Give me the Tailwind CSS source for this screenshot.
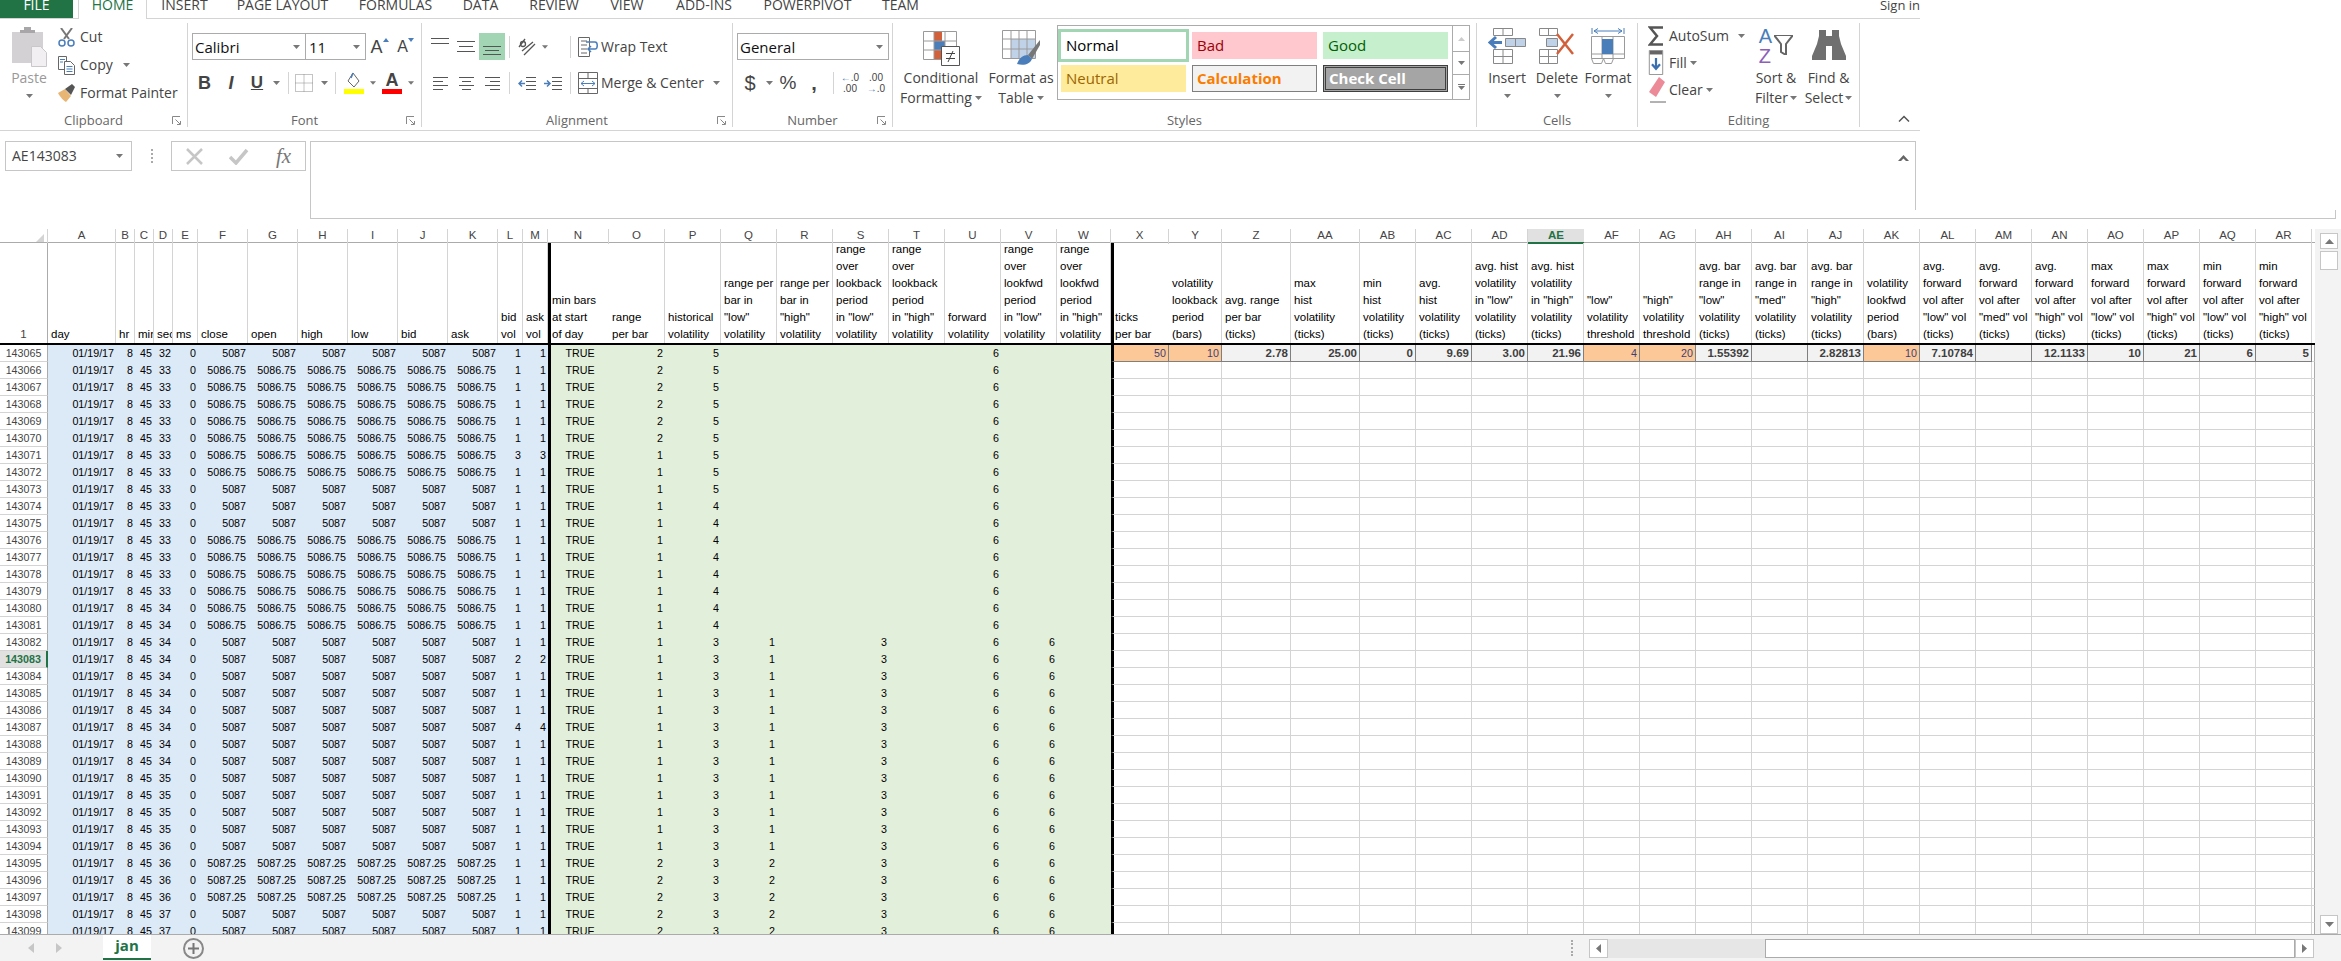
<!DOCTYPE html>
<html lang="en">
<head>
    <meta charset="UTF-8">
    <title>Excel - jan</title>
    <script src="https://cdn.jsdelivr.net/npm/@tailwindcss/browser@4"></script>
</head>
<body class="w-[2341px] h-[961px] overflow-hidden bg-white font-['Open_Sans',sans-serif] text-[#444]">
    <svg class="hidden">
        <symbol id="caret" viewBox="0 0 7 4"><path d="M0 0h7L3.500 4z" fill="#777"/></symbol>
        <symbol id="launcher" viewBox="0 0 9 9"><path d="M.5 8V.5H8M3.500 3.500L8 8M8.500 5v3.500H5" fill="none" stroke="#888"/></symbol>
    </svg>

    <!-- Tabs -->
    <div class="flex h-[18px] w-[1920px] text-[14px] leading-[10px]">
        <div class="w-[73px] h-[18px] bg-[#217346] text-white text-center">FILE</div>
        <div class="relative z-10 ml-[5px] w-[69px] h-[19px] bg-white border-x border-[#d4d4d4] text-[#217346] text-center">HOME</div>
        <div class="w-[75px] text-center">INSERT</div>
        <div class="w-[121px] text-center">PAGE LAYOUT</div>
        <div class="w-[105px] text-center">FORMULAS</div>
        <div class="w-[65px] text-center">DATA</div>
        <div class="w-[82px] text-center">REVIEW</div>
        <div class="w-[64px] text-center">VIEW</div>
        <div class="w-[90px] text-center">ADD-INS</div>
        <div class="w-[117px] text-center">POWERPIVOT</div>
        <div class="w-[69px] text-center">TEAM</div>
        <div class="ml-auto text-[13px]">Sign in</div>
    </div>

    <!-- Ribbon -->
    <div class="flex w-[1920px] h-[113px] pt-[4px] border-y border-[#d4d4d4] text-[14px] leading-[20px]">

        <!-- Clipboard -->
        <div class="w-[188px] h-[104px] border-r border-[#d4d4d4] flex flex-col">
            <div class="h-[90px] flex">
                <div class="w-[58px] flex flex-col items-center text-[#999]">
                    <svg class="mt-[4px]" width="38" height="40" viewBox="0 0 38 40">
                        <rect x="2" y="5" width="31" height="31" fill="#d3d1d3"/>
                        <path d="M10 6V3h4V0h7v3h4v3z" fill="#a8a6a8"/>
                        <path d="M21.500 19.500h9l6 6v14h-15z" fill="#f2eff3" stroke="#c9c7c9"/>
                    </svg>
                    <span class="mt-[1px]">Paste</span>
                    <svg class="mt-[6px]" width="7" height="4"><use href="#caret"/></svg>
                </div>
                <div class="flex flex-col">
                    <div class="h-[28px] flex items-center gap-[5px]">
                        <svg width="17" height="19" viewBox="0 0 17 19"><path d="M3 0l8 11M14 0L6 11" stroke="#777" stroke-width="2"/><circle cx="4" cy="15" r="3" fill="none" stroke="#4a7ebb" stroke-width="1.500"/><circle cx="13" cy="15" r="3" fill="none" stroke="#4a7ebb" stroke-width="1.500"/></svg>
                        <span>Cut</span>
                    </div>
                    <div class="h-[28px] flex items-center gap-[5px]">
                        <svg width="17" height="19" viewBox="0 0 17 19" fill="white" stroke="#666"><path d="M.5.500h8v13h-8z"/><path d="M6.500 5.500h6l4 4v9h-10z"/><path d="M2 3.500h5M2 6h3M8.500 10.500h6M8.500 13h6M8.500 15.500h6" stroke="#4a7ebb"/></svg>
                        <span>Copy</span>
                        <svg class="ml-[5px]" width="7" height="4"><use href="#caret"/></svg>
                    </div>
                    <div class="h-[28px] flex items-center gap-[5px]">
                        <svg width="17" height="18" viewBox="0 0 17 18"><path d="M0 9l7-4 6 7-5 6c-2-1-6-5-8-9z" fill="#e7b574"/><path d="M7 5l7-5 3 3-4 8z" fill="#555"/></svg>
                        <span class="whitespace-nowrap">Format Painter</span>
                    </div>
                </div>
            </div>
            <div class="relative text-center text-[13px] leading-[14px] text-[#666]">Clipboard
                <svg class="absolute right-[6px] top-[3px]" width="9" height="9"><use href="#launcher"/></svg>
            </div>
        </div>

        <!-- Font -->
        <div class="w-[234px] h-[104px] border-r border-[#d4d4d4] flex flex-col">
            <div class="h-[90px] pl-[4px]">
                <div class="mt-[10px] h-[27px] flex items-center">
                    <div class="w-[114px] h-[27px] border border-[#ababab] flex items-center justify-between pl-[2px] pr-[5px] text-[15px] text-[#111]">Calibri
                        <svg width="7" height="4"><use href="#caret"/></svg>
                    </div>
                    <div class="-ml-px w-[61px] h-[27px] border border-[#ababab] flex items-center justify-between pl-[3px] pr-[5px] text-[15px] text-[#111]">11
                        <svg width="7" height="4"><use href="#caret"/></svg>
                    </div>
                    <div class="w-[27px] flex justify-center items-start text-[18px] font-['Liberation_Sans',sans-serif]">A<svg class="mt-[1px]" width="6" height="4"><path d="M0 4l3-4 3 4z" fill="#4a7ebb"/></svg></div>
                    <div class="w-[25px] flex justify-center items-start text-[16px] font-['Liberation_Sans',sans-serif]">A<svg class="mt-[1px]" width="6" height="4"><path d="M0 0h6L3 4z" fill="#4a7ebb"/></svg></div>
                </div>
                <div class="mt-[9px] h-[28px] flex items-center font-['Liberation_Sans',sans-serif]">
                    <div class="w-[25px] text-center font-bold text-[18px]">B</div>
                    <div class="w-[28px] text-center font-bold italic text-[18px]">I</div>
                    <div class="w-[24px] text-center font-bold text-[17px] underline">U</div>
                    <div class="w-[14px] flex justify-center"><svg width="7" height="4"><use href="#caret"/></svg></div>
                    <div class="ml-[5px] w-px h-[22px] bg-[#d4d4d4]"></div>
                    <div class="w-[30px] flex justify-center">
                        <svg width="18" height="18" viewBox="0 0 18 18" fill="none" stroke="#888" stroke-dasharray="1 1"><path d="M.5.500h17v17H.5zM9 .5v17M.5 9h17"/></svg>
                    </div>
                    <div class="w-[10px] flex justify-center"><svg width="7" height="4"><use href="#caret"/></svg></div>
                    <div class="ml-[6px] w-px h-[22px] bg-[#d4d4d4]"></div>
                    <div class="ml-[2px] w-[32px] flex justify-center">
                        <svg width="20" height="22" viewBox="0 0 20 22"><path d="M9 1l6 8-5 6-6-6z" fill="white" stroke="#666"/><path d="M7 6l2-5" stroke="#4a7ebb" stroke-width="1.500"/><rect y="17" width="20" height="5" fill="#ff0"/></svg>
                    </div>
                    <div class="w-[6px] flex justify-center"><svg width="7" height="4"><use href="#caret"/></svg></div>
                    <div class="w-[32px] flex flex-col items-center leading-[17px]">
                        <span class="font-bold text-[18px] h-[17px]">A</span>
                        <span class="w-[20px] h-[5px] bg-[#f00]"></span>
                    </div>
                    <div class="w-[6px] flex justify-center"><svg width="7" height="4"><use href="#caret"/></svg></div>
                </div>
            </div>
            <div class="relative text-center text-[13px] leading-[14px] text-[#666]">Font
                <svg class="absolute right-[6px] top-[3px]" width="9" height="9"><use href="#launcher"/></svg>
            </div>
        </div>

        <!-- Alignment -->
        <div class="w-[311px] h-[104px] border-r border-[#d4d4d4] flex flex-col">
            <div class="h-[90px] pl-[5px]">
                <div class="mt-[10px] h-[27px] flex items-center">
                    <div class="w-[26px] flex justify-center"><svg width="18" height="20" viewBox="0 0 18 20" stroke="#555"><path d="M0 1.500h18M0 6.500h18"/></svg></div>
                    <div class="w-[26px] flex justify-center"><svg width="18" height="20" viewBox="0 0 18 20" stroke="#555"><path d="M0 4.500h18M2 9.500h14M0 14.500h18"/></svg></div>
                    <div class="w-[26px] h-[27px] bg-[#a2d5b4] flex justify-center items-center"><svg width="18" height="20" viewBox="0 0 18 20" stroke="#555"><path d="M0 9.500h18M2 13.500h14M0 17.500h18"/></svg></div>
                    <div class="ml-[4px] w-px h-[22px] bg-[#d4d4d4]"></div>
                    <div class="ml-[2px] w-[30px] flex justify-center"><svg width="20" height="20" viewBox="0 0 20 20" fill="none" stroke="#555" stroke-width="1.300"><path d="M2 10l6-8M5 14l11-9M7 18l11-11"/><circle cx="6" cy="7" r="2.500"/></svg></div>
                    <div class="w-[6px] flex justify-center"><svg width="7" height="4"><use href="#caret"/></svg></div>
                    <div class="ml-[22px] w-px h-[22px] bg-[#d4d4d4]"></div>
                    <div class="w-[30px] flex justify-end pr-[3px]"><svg width="20" height="20" viewBox="0 0 20 20" fill="none" stroke="#666"><path d="M.5.500h11v19H.5zM3 4h6M3 8h6M3 12h6M3 16h6"/><path d="M8 5h9c3 0 3 7 0 7h-6M13 9l-3 3 3 3" stroke="#4a7ebb" stroke-width="1.500"/></svg></div>
                    <span class="whitespace-nowrap">Wrap Text</span>
                </div>
                <div class="mt-[9px] h-[28px] flex items-center">
                    <div class="w-[26px] flex justify-center"><svg width="15" height="13" viewBox="0 0 15 13" stroke="#555"><path d="M0 .5h15M0 4.500h10M0 8.500h15M0 12.500h10"/></svg></div>
                    <div class="w-[26px] flex justify-center"><svg width="15" height="13" viewBox="0 0 15 13" stroke="#555"><path d="M0 .5h15M3 4.500h9M0 8.500h15M3 12.500h9"/></svg></div>
                    <div class="w-[26px] flex justify-center"><svg width="15" height="13" viewBox="0 0 15 13" stroke="#555"><path d="M0 .5h15M5 4.500h10M0 8.500h15M5 12.500h10"/></svg></div>
                    <div class="ml-[4px] w-px h-[22px] bg-[#d4d4d4]"></div>
                    <div class="ml-[4px] w-[26px] flex justify-center"><svg width="18" height="13" viewBox="0 0 18 13" fill="none"><path d="M8 .5h10M8 4.500h10M8 8.500h10M8 12.500h10" stroke="#555"/><path d="M7 6.500H1M4 3.500l-3 3 3 3" stroke="#4a7ebb" stroke-width="1.500"/></svg></div>
                    <div class="w-[26px] flex justify-center"><svg width="18" height="13" viewBox="0 0 18 13" fill="none"><path d="M8 .5h10M8 4.500h10M8 8.500h10M8 12.500h10" stroke="#555"/><path d="M0 6.500h6M3 3.500l3 3-3 3" stroke="#4a7ebb" stroke-width="1.500"/></svg></div>
                    <div class="ml-[4px] w-px h-[22px] bg-[#d4d4d4]"></div>
                    <div class="w-[30px] flex justify-end pr-[3px]"><svg width="20" height="22" viewBox="0 0 20 22" fill="none" stroke="#666"><path d="M.5.500h19v21H.5zM.5 6.500h19M.5 16.500h19M10 .5v6M10 16.500v5"/><path d="M3 11.500h14M6 9l-3 2.500L6 14M14 9l3 2.500-3 2.500" stroke="#4a7ebb"/></svg></div>
                    <span class="whitespace-nowrap">Merge &amp; Center</span>
                    <svg class="ml-[9px]" width="7" height="4"><use href="#caret"/></svg>
                </div>
            </div>
            <div class="relative text-center text-[13px] leading-[14px] text-[#666]">Alignment
                <svg class="absolute right-[6px] top-[3px]" width="9" height="9"><use href="#launcher"/></svg>
            </div>
        </div>

        <!-- Number -->
        <div class="w-[160px] h-[104px] border-r border-[#d4d4d4] flex flex-col">
            <div class="h-[90px] pl-[4px]">
                <div class="mt-[10px] w-[152px] h-[27px] border border-[#ababab] flex items-center justify-between pl-[2px] pr-[5px] text-[15px] text-[#111]">General
                    <svg width="7" height="4"><use href="#caret"/></svg>
                </div>
                <div class="mt-[9px] h-[28px] flex items-center font-['Liberation_Sans',sans-serif]">
                    <div class="w-[26px] text-center text-[20px]">$</div>
                    <div class="w-[12px] flex justify-center"><svg width="7" height="4"><use href="#caret"/></svg></div>
                    <div class="w-[26px] text-center text-[19px]">%</div>
                    <div class="w-[26px] text-center text-[20px] font-bold">,</div>
                    <div class="ml-[6px] w-px h-[22px] bg-[#d4d4d4]"></div>
                    <div class="ml-[1px] w-[30px] flex flex-col items-center text-[10px] leading-[11px]"><span><b class="text-[#4a7ebb]">←</b>.0</span><span>.00</span></div>
                    <div class="w-[22px] flex flex-col items-center text-[10px] leading-[11px]"><span>.00</span><span><b class="text-[#4a7ebb]">→</b>.0</span></div>
                </div>
            </div>
            <div class="relative text-center text-[13px] leading-[14px] text-[#666]">Number
                <svg class="absolute right-[6px] top-[3px]" width="9" height="9"><use href="#launcher"/></svg>
            </div>
        </div>

        <!-- Styles -->
        <div class="w-[584px] h-[104px] border-r border-[#d4d4d4] flex flex-col">
            <div class="h-[90px] flex pl-[8px]">
                <div class="w-[80px] flex flex-col items-center">
                    <div class="h-[45px] pt-[8px]">
                        <svg width="37" height="35" viewBox="0 0 37 35" fill="none" stroke="#9a9a9a">
                            <path d="M.5.500h33v28H.5z" fill="white"/>
                            <rect x="11" y="1" width="8" height="9" fill="#d2603a" stroke="none"/>
                            <rect x="11" y="10" width="11" height="9" fill="#4a7ebb" stroke="none"/>
                            <rect x="11" y="19" width="8" height="9" fill="#d2603a" stroke="none"/>
                            <path d="M11 .5v28M22 .5v28M.5 10h33M.5 19h33"/>
                            <path d="M18.500 15.500h18v19h-18z" fill="white" stroke="#555"/>
                            <path d="M23 22.500h9M23 27.500h9M30 20l-5 11" stroke="#444"/>
                        </svg>
                    </div>
                    <span class="whitespace-nowrap">Conditional</span>
                    <span class="flex items-center gap-[3px] whitespace-nowrap">Formatting<svg width="7" height="4"><use href="#caret"/></svg></span>
                </div>
                <div class="w-[76px] pl-[4px] flex flex-col items-center">
                    <div class="h-[45px] pt-[7px]">
                        <svg width="38" height="36" viewBox="0 0 38 36" fill="none" stroke="#9a9a9a">
                            <path d="M.5.500h33v28H.5z" fill="white"/>
                            <rect x="9" y="9" width="24" height="19" fill="#c0d2e8" stroke="none"/>
                            <path d="M9 .5v28M17 .5v28M25 .5v28M.5 9h33M.5 19h33"/>
                            <path d="M38 10L26 25l4 4 8-14z" fill="#777" stroke="none"/>
                            <path d="M15 34c2-6 6-9 11-9l4 4c-2 5-8 7-15 5z" fill="#4a7ebb" stroke="none"/>
                        </svg>
                    </div>
                    <span class="whitespace-nowrap">Format as</span>
                    <span class="flex items-center gap-[3px]">Table<svg width="7" height="4"><use href="#caret"/></svg></span>
                </div>
                <div class="mt-[2px] w-[413px] h-[75px] border border-[#ababab] flex text-[15px]">
                    <div class="w-[394px] pl-[3px] pt-[6px] grid grid-cols-[125px_125px_125px] grid-rows-[27px_27px] gap-[6px]">
                        <div class="bg-white outline-[3px] outline-solid outline-[#a2d5b4] text-black pl-[5px] leading-[27px]">Normal</div>
                        <div class="bg-[#ffc7ce] text-[#9c0006] pl-[5px] leading-[27px]">Bad</div>
                        <div class="bg-[#c6efce] text-[#006100] pl-[5px] leading-[27px]">Good</div>
                        <div class="bg-[#ffeb9c] text-[#9c6500] pl-[5px] leading-[27px]">Neutral</div>
                        <div class="bg-[#f2f2f2] border border-[#7f7f7f] text-[#fa7d00] font-bold pl-[4px] leading-[25px]">Calculation</div>
                        <div class="bg-[#a5a5a5] border-[3px] border-double border-[#3f3f3f] text-white font-bold pl-[3px] leading-[21px]">Check Cell</div>
                    </div>
                    <div class="w-[17px] flex flex-col border-l border-[#ababab]">
                        <div class="h-[26px] border-b border-[#ababab] flex items-center justify-center"><svg width="7" height="4"><path d="M0 4l3.500-4L7 4z" fill="#ccc"/></svg></div>
                        <div class="h-[23px] border-b border-[#ababab] flex items-center justify-center"><svg width="7" height="4"><use href="#caret"/></svg></div>
                        <div class="flex-1 flex flex-col items-center justify-center gap-[1px]"><span class="w-[7px] h-px bg-[#777]"></span><svg width="7" height="4"><use href="#caret"/></svg></div>
                    </div>
                </div>
            </div>
            <div class="text-center text-[13px] leading-[14px] text-[#666]">Styles</div>
        </div>

        <!-- Cells -->
        <div class="w-[161px] h-[104px] border-r border-[#d4d4d4] flex flex-col">
            <div class="h-[90px] flex pl-[5px]">
                <div class="w-[50px] flex flex-col items-center">
                    <div class="h-[45px] pt-[5px]">
                        <svg width="38" height="36" viewBox="0 0 38 36" fill="none" stroke="#888">
                            <path d="M5.500.500h19v7h-19zM15 .5v7M5.500 21.500h19v14h-19zM15 21.500v14M5.500 28.500h19"/>
                            <path d="M17.500 10.500h20v8h-20z" fill="#c0d2e8"/><path d="M27.500 10.500v8"/>
                            <path d="M14 14.500H3M8 9l-6 5.500L8 20" stroke="#4a7ebb" stroke-width="3"/>
                        </svg>
                    </div>
                    <span>Insert</span>
                    <svg class="mt-[6px]" width="7" height="4"><use href="#caret"/></svg>
                </div>
                <div class="w-[50px] flex flex-col items-center">
                    <div class="h-[45px] pt-[5px]">
                        <svg width="36" height="36" viewBox="0 0 36 36" fill="none" stroke="#888">
                            <path d="M.5.500h18v7H.5zM9.500.5v7M.5 21.500h18v14H.5zM9.500 21.500v14M.5 28.500h18"/>
                            <path d="M7.500 10.500h11v8h-11z" fill="#c0d2e8"/>
                            <path d="M18 6l16 20M34 6L18 26" stroke="#d2603a" stroke-width="2.500"/>
                        </svg>
                    </div>
                    <span>Delete</span>
                    <svg class="mt-[6px]" width="7" height="4"><use href="#caret"/></svg>
                </div>
                <div class="w-[52px] flex flex-col items-center">
                    <div class="h-[45px] pt-[4px]">
                        <svg width="34" height="37" viewBox="0 0 34 37" fill="none" stroke="#9a9a9a">
                            <path d="M1 1v6M33 1v6M3 4h28M7 1.500L3 4l4 2.500M27 1.500L31 4l-4 2.500" stroke="#4a7ebb"/>
                            <path d="M.5 9.500h33v22H.5zM11 9.500v22M22 9.500v22M.5 27h33"/>
                            <rect x="11" y="12" width="11" height="15" fill="#4a7ebb" stroke="none"/>
                            <path d="M.5 31.500l2 5h8l2-5M12.500 31.500l2 5h6l2-5"/>
                        </svg>
                    </div>
                    <span>Format</span>
                    <svg class="mt-[6px]" width="7" height="4"><use href="#caret"/></svg>
                </div>
            </div>
            <div class="text-center text-[13px] leading-[14px] text-[#666]">Cells</div>
        </div>

        <!-- Editing -->
        <div class="w-[222px] h-[104px] border-r border-[#d4d4d4] flex flex-col">
            <div class="h-[90px] flex">
                <div class="w-[112px] flex flex-col">
                    <div class="h-[26px] flex items-center">
                        <div class="w-[31px] flex justify-end pr-[5px]"><svg width="16" height="22" viewBox="0 0 16 22" fill="none" stroke="#555" stroke-width="2.500"><path d="M15 2.500H2l7 8.500-7 8.500h13"/></svg></div>
                        <span>AutoSum</span>
                        <svg class="ml-[9px]" width="7" height="4"><use href="#caret"/></svg>
                    </div>
                    <div class="h-[27px] flex items-center">
                        <div class="w-[31px] flex justify-end pr-[5px]"><svg width="16" height="25" viewBox="0 0 16 28" fill="none"><path d="M.5 .5h15v27H.5z" stroke="#888"/><rect x="1" y="1" width="14" height="4" fill="#666"/><path d="M8 9v12M3.500 16L8 21l4.500-5" stroke="#3a6fb0" stroke-width="2.500"/></svg></div>
                        <span>Fill</span>
                        <svg class="ml-[3px]" width="7" height="4"><use href="#caret"/></svg>
                    </div>
                    <div class="h-[28px] flex items-center">
                        <div class="w-[31px] flex justify-end pr-[2px]"><svg width="18" height="26" viewBox="0 0 18 26"><path d="M0 15L10 0l6 5-9 15z" fill="#ec8a97"/><path d="M1 25h16" stroke="#666"/></svg></div>
                        <span>Clear</span>
                        <svg class="ml-[3px]" width="7" height="4"><use href="#caret"/></svg>
                    </div>
                </div>
                <div class="w-[52px] flex flex-col items-center">
                    <div class="h-[45px] flex items-start pt-[3px]">
                        <div class="flex flex-col font-['Liberation_Sans',sans-serif] text-[20px] leading-[20px] pr-[2px]"><span class="text-[#4a7ebb]">A</span><span class="text-[#8d5fb8]">Z</span></div>
                        <svg class="mt-[9px]" width="19" height="20" viewBox="0 0 19 20"><path d="M0 0h19l-7 9v11l-5-3V9z" fill="none" stroke="#666" stroke-width="2"/></svg>
                    </div>
                    <span class="whitespace-nowrap">Sort &amp;</span>
                    <span class="flex items-center gap-[2px]">Filter<svg width="7" height="4"><use href="#caret"/></svg></span>
                </div>
                <div class="w-[53px] flex flex-col items-center">
                    <div class="h-[45px] pt-[7px]">
                        <svg width="34" height="30" viewBox="0 0 34 30" fill="#6f6f6f"><path d="M7 0h7v6h6V0h7v6l2 8 5 12v4H20V16h-6v14H0v-4l5-12 2-8z"/></svg>
                    </div>
                    <span class="whitespace-nowrap">Find &amp;</span>
                    <span class="flex items-center gap-[2px]">Select<svg width="7" height="4"><use href="#caret"/></svg></span>
                </div>
            </div>
            <div class="text-center text-[13px] leading-[14px] text-[#666]">Editing</div>
        </div>

        <div class="flex-1 h-[104px] flex justify-end items-end pr-[10px] pb-[5px]">
            <svg width="12" height="7" viewBox="0 0 12 7" fill="none" stroke="#555" stroke-width="1.500"><path d="M1 6.500l5-5 5 5"/></svg>
        </div>
    </div>

    <!-- Formula bar -->
    <div class="flex h-[98px] pt-[10px]">
        <div class="w-[310px] flex items-start text-[14px]">
            <div class="ml-[5px] w-[127px] h-[30px] border border-[#c6c6c6] flex items-center justify-between pl-[6px] pr-[8px] leading-[28px]">AE143083
                <svg width="7" height="4"><use href="#caret"/></svg>
            </div>
            <div class="w-[39px] h-[30px] flex justify-center items-center">
                <span class="w-[2px] h-[14px] border-l-2 border-dotted border-[#aaa]"></span>
            </div>
            <div class="w-[135px] h-[30px] border border-[#c6c6c6] flex items-center">
                <div class="w-[44px] flex justify-center"><svg width="17" height="17" viewBox="0 0 17 17" stroke="#c6c6c6" stroke-width="2.500"><path d="M1 1l15 15M16 1L1 16"/></svg></div>
                <div class="w-[46px] flex justify-center"><svg width="20" height="17" viewBox="0 0 20 17" fill="none" stroke="#c6c6c6" stroke-width="3.500"><path d="M1 9l6 6L18 2"/></svg></div>
                <div class="w-[43px] text-center font-['Liberation_Serif',serif] italic text-[21px] text-[#777] leading-[28px]">fx</div>
            </div>
        </div>
        <div class="relative w-[2026px] h-[78px] border-l border-b border-[#c6c6c6]">
            <div class="w-[1605px] h-[69px] border-t border-r border-[#c6c6c6] flex justify-end pr-[6px] pt-[12px]">
                <svg width="11" height="8" viewBox="0 0 11 8"><path d="M0 7l5.500-6L11 7H8L5.500 4.500 3 7z" fill="#666"/></svg>
            </div>
            <span class="absolute right-0 bottom-0 w-px h-[8px] bg-[#c6c6c6]"></span>
        </div>
    </div>

    <!-- Sheet -->
    <div class="flex h-[705px]">
        <div id="sheet" class="w-[2315px] h-[705px] overflow-hidden font-['Liberation_Sans',sans-serif]"></div>
        <div class="w-[26px] h-[705px] bg-[#f3f3f3] flex flex-col items-center pt-[4px] pl-[2px]">
            <div class="w-[18px] h-[16px] bg-white border border-[#c6c6c6] flex items-center justify-center"><svg width="9" height="5"><path d="M0 5l4.500-5L9 5z" fill="#777"/></svg></div>
            <div class="mt-[2px] w-[18px] h-[19px] bg-white border border-[#c6c6c6]"></div>
            <div class="mt-auto w-[18px] h-[19px] bg-white border border-[#c6c6c6] flex items-center justify-center"><svg width="9" height="5"><path d="M0 0h9L4.500 5z" fill="#777"/></svg></div>
        </div>
    </div>

    <!-- Status bar -->
    <div class="h-[27px] bg-[#f3f3f3] border-t border-[#ababab] flex items-start">
        <div class="w-[103px] h-[26px] flex items-center">
            <svg class="ml-[28px]" width="6" height="10"><path d="M6 0v10L0 5z" fill="#c6c6c6"/></svg>
            <svg class="ml-[22px]" width="6" height="10"><path d="M0 0v10l6-5z" fill="#c6c6c6"/></svg>
        </div>
        <div class="w-[48px] h-[25px] bg-white border-b-2 border-[#217346] text-center text-[#217346] font-bold text-[15px] leading-[21px]">jan</div>
        <div class="ml-[32px] mt-[3px] w-[21px] h-[21px] rounded-full border-2 border-[#888] flex items-center justify-center">
            <svg width="11" height="11" viewBox="0 0 11 11" stroke="#777" stroke-width="2"><path d="M5.500 0v11M0 5.500h11"/></svg>
        </div>
        <span class="ml-[1367px] mt-[5px] w-[2px] h-[16px] border-l-2 border-dotted border-[#aaa]"></span>
        <div class="ml-[16px] mt-[4px] w-[725px] h-[19px] flex">
            <div class="w-[19px] h-[19px] bg-white border border-[#c6c6c6] flex items-center justify-center"><svg width="5" height="9"><path d="M5 0v9L0 4.500z" fill="#777"/></svg></div>
            <div class="w-[157px] h-[19px] bg-[#e6e6e6]"></div>
            <div class="flex-1 h-[19px] bg-white border border-[#ababab]"></div>
            <div class="w-[19px] h-[19px] bg-white border border-[#c6c6c6] flex items-center justify-center"><svg width="5" height="9"><path d="M0 0v9l5-4.500z" fill="#777"/></svg></div>
        </div>
    </div>

    <script>
        const colNames = ['A','B','C','D','E','F','G','H','I','J','K','L','M','N','O','P','Q','R','S','T','U','V','W','X','Y','Z','AA','AB','AC','AD','AE','AF','AG','AH','AI','AJ','AK','AL','AM','AN','AO','AP','AQ','AR'];
        const headers = ['day','hr','min','sec','ms','close','open','high','low','bid','ask','bid|vol','ask|vol','min bars|at start|of day','range|per bar','historical|volatility','range per|bar in|"low"|volatility','range per|bar in|"high"|volatility','range|over|lookback|period|in "low"|volatility','range|over|lookback|period|in "high"|volatility','forward|volatility','range|over|lookfwd|period|in "low"|volatility','range|over|lookfwd|period|in "high"|volatility','ticks|per bar','volatility|lookback|period|(bars)','avg. range|per bar|(ticks)','max|hist|volatility|(ticks)','min|hist|volatility|(ticks)','avg.|hist|volatility|(ticks)','avg. hist|volatility|in "low"|volatility|(ticks)','avg. hist|volatility|in "high"|volatility|(ticks)','"low"|volatility|threshold','"high"|volatility|threshold','avg. bar|range in|"low"|volatility|(ticks)','avg. bar|range in|"med"|volatility|(ticks)','avg. bar|range in|"high"|volatility|(ticks)','volatility|lookfwd|period|(bars)','avg.|forward|vol after|"low" vol|(ticks)','avg.|forward|vol after|"med" vol|(ticks)','avg.|forward|vol after|"high" vol|(ticks)','max|forward|vol after|"low" vol|(ticks)','max|forward|vol after|"high" vol|(ticks)','min|forward|vol after|"low" vol|(ticks)','min|forward|vol after|"high" vol|(ticks)'];

        // right hand block, first data row only: [value, is input cell]
        const summary = [['50',1],['10',1],['2.78'],['25.00'],['0'],['9.69'],['3.00'],['21.96'],['4',1],['20',1],['1.55392'],[''],['2.82813'],['10',1],['7.10784'],[''],['12.1133'],['10'],['21'],['6'],['5']];

        const gridClass = 'grid grid-cols-[48px_68px_19px_19px_19px_25px_50px_50px_50px_50px_50px_50px_25px_25px_61px_56px_56px_56px_56px_56px_56px_56px_56px_54px_58px_53px_69px_69px_56px_56px_56px_56px_56px_56px_56px_56px_56px_56px_56px_56px_56px_56px_56px_56px_56px_3px]';
        const N = colNames.indexOf('N'), X = colNames.indexOf('X');

        function rowValues(n) {
            const i = n - 143000;
            const sec = i == 65 ? 32 : i <= 79 ? 33 : i <= 89 ? 34 : i <= 93 ? 35 : i <= 97 ? 36 : 37;
            const price = (i == 65 || (i >= 73 && i <= 75) || (i >= 82 && i <= 94) || i >= 98) ? '5087' : i >= 95 ? '5087.25' : '5086.75';
            const vol = i == 71 ? 3 : i == 83 ? 2 : i == 87 ? 4 : 1;
            const late = i >= 82;
            return ['01/19/17', 8, 45, sec, 0, price, price, price, price, price, price, vol, vol, 'TRUE',
                (i <= 70 || i >= 95) ? 2 : 1,
                i <= 73 ? 5 : i <= 81 ? 4 : 3,
                late ? (i >= 95 ? 2 : 1) : '', '', late ? 3 : '', '', 6, late ? 6 : '', ''];
        }

        let html = '<div class="' + gridClass + ' h-[14px] bg-white border-b border-[#ababab] text-[11.5px] leading-[13px] text-[#444] text-center">';
        html += '<div class="border-r border-[#d4d4d4] flex justify-end items-end pr-[3px] pb-[2px]"><svg width="8" height="8"><path d="M8 0v8H0z" fill="#d4d4d4"/></svg></div>';
        colNames.forEach(c => {
            html += c == 'AE'
                ? '<div class="bg-[#e1e1e1] border-b-2 border-[#217346] text-[#217346] font-bold">' + c + '</div>'
                : '<div class="border-r border-[#d4d4d4]">' + c + '</div>';
        });
        html += '<div></div></div>';

        html += '<div class="' + gridClass + ' h-[102px] border-b-2 border-black text-[11.5px] leading-[17px] text-black">';
        html += '<div class="border-r border-[#ababab] flex items-end justify-center text-[#444]">1</div>';
        headers.forEach((h, c) => {
            const thick = c == N || c == X;
            html += '<div class="flex flex-col justify-end overflow-hidden whitespace-nowrap ' + (thick ? 'border-l-[3px] border-black pl-[1px]' : 'border-r border-[#d4d4d4] pl-[3px]') + '">'
                + h.split('|').map(t => '<span>' + t + '</span>').join('') + '</div>';
        });
        html += '<div></div></div>';

        for (let n = 143065; n <= 143099; n++) {
            const vals = rowValues(n);
            html += '<div class="' + gridClass + ' h-[17px] text-[10.7px] leading-[16px] text-black">';
            html += n == 143083
                ? '<div class="bg-[#e1e1e1] border-r-2 border-[#217346] border-b border-b-[#d4d4d4] text-center text-[#217346] font-bold">' + n + '</div>'
                : '<div class="border-r border-r-[#ababab] border-b border-b-[#d4d4d4] text-center text-[#444]">' + n + '</div>';
            vals.forEach((v, c) => {
                const fill = c < N ? 'bg-[#dce9f6]' : 'bg-[#e2efda]';
                const edge = c == N ? ' border-l-[3px] border-black' : '';
                const align = v === 'TRUE' ? ' text-center' : ' text-right pr-[2px]';
                html += '<div class="' + fill + edge + align + ' overflow-hidden whitespace-nowrap">' + v + '</div>';
            });
            summary.forEach((s, c) => {
                const edge = c == 0 ? ' border-l-[3px] border-l-black' : '';
                if (n == 143065) {
                    const look = s[1] ? 'bg-[#fcc897] text-[#3f3f76]' : 'bg-[#f2f2f2] text-[#3f3f3f] font-bold text-[11.5px]';
                    html += '<div class="' + look + edge + ' border-r border-b border-[#7f7f7f] text-right pr-[2px] overflow-hidden">' + s[0] + '</div>';
                } else {
                    html += '<div class="border-r border-b border-[#d4d4d4]' + edge + '"></div>';
                }
            });
            html += '<div class="border-b border-[#d4d4d4] border-r border-r-[#ababab]"></div></div>';
        }
        document.getElementById('sheet').innerHTML = html;
    </script>
</body>
</html>
